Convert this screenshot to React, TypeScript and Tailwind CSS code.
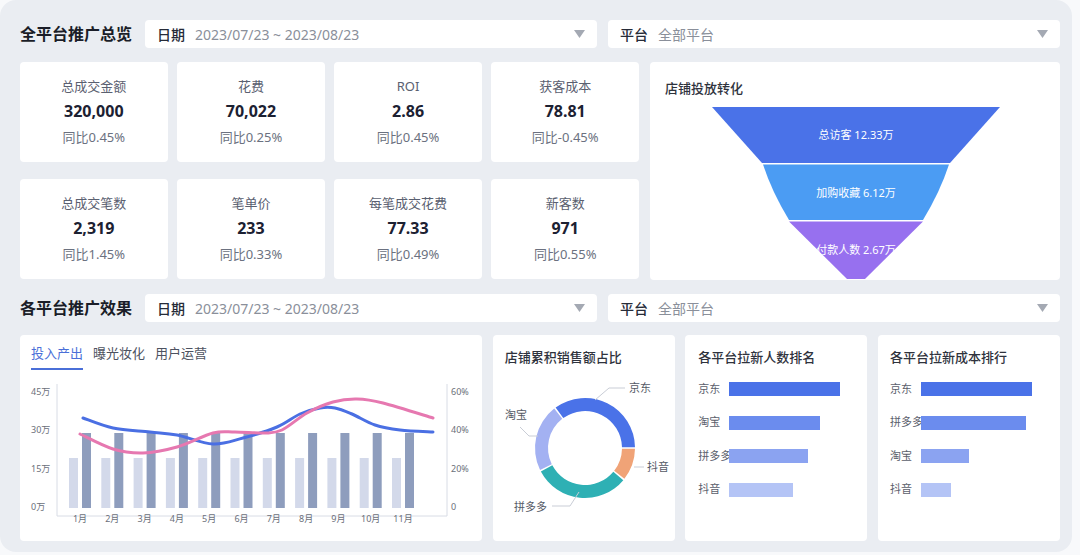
import React from "react";

type P = [number, number];

function smooth(pts: P[]): string {
  let d = `M${pts[0][0]},${pts[0][1]}`;
  for (let i = 0; i < pts.length - 1; i++) {
    const p0 = pts[i - 1] || pts[i];
    const p1 = pts[i];
    const p2 = pts[i + 1];
    const p3 = pts[i + 2] || p2;
    const c1x = p1[0] + (p2[0] - p0[0]) / 6;
    const c1y = p1[1] + (p2[1] - p0[1]) / 6;
    const c2x = p2[0] - (p3[0] - p1[0]) / 6;
    const c2y = p2[1] - (p3[1] - p1[1]) / 6;
    d += ` C${c1x.toFixed(1)},${c1y.toFixed(1)} ${c2x.toFixed(1)},${c2y.toFixed(1)} ${p2[0]},${p2[1]}`;
  }
  return d;
}

function arc(cx: number, cy: number, R: number, r: number, a0: number, a1: number): string {
  const rad = (a: number) => (a * Math.PI) / 180;
  const pt = (rr: number, a: number) => [cx + rr * Math.cos(rad(a)), cy + rr * Math.sin(rad(a))];
  const large = a1 - a0 > 180 ? 1 : 0;
  const [x0, y0] = pt(R, a0);
  const [x1, y1] = pt(R, a1);
  const [x2, y2] = pt(r, a1);
  const [x3, y3] = pt(r, a0);
  return `M${x0},${y0} A${R},${R} 0 ${large} 1 ${x1},${y1} L${x2},${y2} A${r},${r} 0 ${large} 0 ${x3},${y3} Z`;
}

function Select({ label, value }: { label: string; value: string }) {
  return (
    <div className="flex h-[28px] w-[452px] items-center rounded-[4px] bg-white pl-[12px] pr-[12px]">
      <span className="text-[14px] font-medium text-[#262b38]">{label}</span>
      <span className="ml-[10px] text-[14px] text-[#8a8f9a]">{value}</span>
      <svg className="ml-auto" width="11" height="8" viewBox="0 0 11 8">
        <path d="M0 0 L11 0 L5.5 8 Z" fill="#a4a9b3" />
      </svg>
    </div>
  );
}

function Kpi({ label, value, change }: { label: string; value: string; change: string }) {
  return (
    <div className="flex h-[100px] flex-col items-center rounded-[4px] bg-white pt-[15px]">
      <div className="text-[13px] leading-[18px] text-[#5a6070]">{label}</div>
      <div className="mt-[5px] text-[16px] font-bold leading-[22px] text-[#1c2132]">{value}</div>
      <div className="mt-[6px] text-[13px] leading-[18px] text-[#6b7180]">{change}</div>
    </div>
  );
}

function BarCard({ title, rows, pl }: { title: string; rows: { name: string; w: number; c: string }[]; pl: string }) {
  return (
    <div className={`flex h-[206px] w-[182px] flex-col rounded-[4px] bg-white pt-[13px] ${pl}`}>
      <div className="text-[13px] font-medium leading-[18px] text-[#2f333d]">{title}</div>
      <div className="mt-[16px] flex flex-col gap-[19.5px]">
        {rows.map((r) => (
          <div key={r.name} className="flex h-[14px] items-center">
            <div className="w-[31px] whitespace-nowrap text-[11px] text-[#5b606c]">{r.name}</div>
            <div className="h-[14px]" style={{ width: r.w, background: r.c }} />
          </div>
        ))}
      </div>
    </div>
  );
}

const BLUE = "#4a72e8";

export default function App() {
  const months = Array.from({ length: 11 }, (_, i) => 60 + i * 32.3);
  const bluePts: P[] = [
    [63, 48], [93, 58], [130, 62], [157, 65], [193, 74], [223, 68], [257, 57], [280, 44],
    [300, 38], [315, 38], [332, 44], [355, 55], [380, 60], [413, 62],
  ];
  const pinkPts: P[] = [
    [60, 64], [93, 79], [123, 83], [157, 77], [193, 63], [215, 62], [245, 63], [262, 60],
    [287, 43], [313, 32], [337, 29], [363, 33], [413, 48],
  ];

  return (
    <div className="h-[555px] w-[1080px] overflow-hidden bg-[#f8f9fb] font-['Noto_Sans','Noto_Sans_CJK_SC',sans-serif]">
      <div className="h-[552px] w-[1072px] rounded-[16px] bg-[#eaedf2] pl-[20px] pt-[20px]">
        {/* Header 1 */}
        <div className="flex h-[28px] w-[1040px] items-center">
          <div className="w-[125px] text-[16px] font-bold text-[#1a1d28]">全平台推广总览</div>
          <Select label="日期" value="2023/07/23 ~ 2023/08/23" />
          <div className="ml-[11px]">
            <Select label="平台" value="全部平台" />
          </div>
        </div>

        {/* Top section */}
        <div className="mt-[14px] flex w-[1040px] gap-[11px]">
          <div className="grid w-[619px] grid-cols-4 gap-x-[9.5px] gap-y-[15px]">
            <Kpi label="总成交金额" value="320,000" change="同比0.45%" />
            <Kpi label="花费" value="70,022" change="同比0.25%" />
            <Kpi label="ROI" value="2.86" change="同比0.45%" />
            <Kpi label="获客成本" value="78.81" change="同比-0.45%" />
            <Kpi label="总成交笔数" value="2,319" change="同比1.45%" />
            <Kpi label="笔单价" value="233" change="同比0.33%" />
            <Kpi label="每笔成交花费" value="77.33" change="同比0.49%" />
            <Kpi label="新客数" value="971" change="同比0.55%" />
          </div>
          <div className="flex h-[218px] w-[410px] flex-col overflow-hidden rounded-[4px] bg-white pt-[17px]">
            <div className="pl-[15px] text-[13px] font-medium leading-[18px] text-[#2f333d]">店铺投放转化</div>
            <svg width="410" height="183" viewBox="0 0 410 183" className="block">
              <path d="M62,10 L350,10 L300,66 L112,66 Z" fill="#4a72e8" />
              <path d="M113,67.5 L299,67.5 Q290,95 273,123 L139,123 Q122,95 113,67.5 Z" fill="#4b9cf3" />
              <path d="M139,124.5 L273,124.5 L215,182 L197,182 Z" fill="#9770ef" />
              <text x="206" y="42" textAnchor="middle" fontSize="11" fill="#ffffff">总访客 12.33万</text>
              <text x="206" y="100" textAnchor="middle" fontSize="11" fill="#ffffff">加购收藏 6.12万</text>
              <text x="206" y="157" textAnchor="middle" fontSize="11" fill="#ffffff">付款人数 2.67万</text>
            </svg>
          </div>
        </div>

        {/* Header 2 */}
        <div className="mt-[14px] flex h-[28px] w-[1040px] items-center">
          <div className="w-[125px] text-[16px] font-bold text-[#1a1d28]">各平台推广效果</div>
          <Select label="日期" value="2023/07/23 ~ 2023/08/23" />
          <div className="ml-[11px]">
            <Select label="平台" value="全部平台" />
          </div>
        </div>

        {/* Bottom section */}
        <div className="mt-[13px] flex w-[1040px] justify-between">
          {/* Chart card */}
          <div className="flex h-[206px] w-[462px] flex-col rounded-[4px] bg-white">
            <div className="flex gap-[10px] pl-[11px] pt-[9px]">
              <div className="border-b-2 border-[#4a6fd8] pb-[6px] text-[13px] leading-[18px] text-[#4a6fd8]">投入产出</div>
              <div className="pb-[6px] text-[13px] leading-[18px] text-[#4d5260]">曝光妆化</div>
              <div className="pb-[6px] text-[13px] leading-[18px] text-[#4d5260]">用户运营</div>
            </div>
            <svg width="462" height="168" viewBox="0 0 462 168" className="block">
              {[
                ["45万", 21],
                ["30万", 59],
                ["15万", 98],
                ["0万", 136],
              ].map(([t, y]) => (
                <text key={t as string} x="11" y={(y as number) + 3.5} fontSize="9" fill="#6b6f7a">{t}</text>
              ))}
              {[
                ["60%", 21],
                ["40%", 59],
                ["20%", 98],
                ["0", 136],
              ].map(([t, y]) => (
                <text key={t as string} x="431" y={(y as number) + 3.5} fontSize="9" fill="#6b6f7a">{t}</text>
              ))}
              <line x1="37" y1="14" x2="37" y2="146" stroke="#d8dce5" strokeWidth="1" />
              <line x1="427" y1="14" x2="427" y2="146" stroke="#d8dce5" strokeWidth="1" />
              <line x1="37" y1="146" x2="427" y2="146" stroke="#d8dce5" strokeWidth="1" />
              {months.map((c, i) => (
                <g key={i}>
                  <rect x={c - 11} y="88" width="9" height="50" fill="#d3d9ea" />
                  <rect x={c + 2} y="63" width="9" height="75" fill="#8e9dbd" />
                  <text x={c} y="152" textAnchor="middle" fontSize="9" fill="#6b6f7a">{`${i + 1}月`}</text>
                </g>
              ))}
              <path d={smooth(bluePts)} fill="none" stroke="#4a6fe3" strokeWidth="3" strokeLinecap="round" />
              <path d={smooth(pinkPts)} fill="none" stroke="#e678b0" strokeWidth="3" strokeLinecap="round" />
            </svg>
          </div>

          {/* Donut card */}
          <div className="flex h-[206px] w-[182px] flex-col rounded-[4px] bg-white pt-[13px]">
            <div className="pl-[12px] text-[13px] font-medium leading-[18px] text-[#2f333d]">店铺累积销售额占比</div>
            <svg width="182" height="175" viewBox="0 0 182 175" className="block">
              <path d={arc(92, 82, 50, 37, -126, -1)} fill={BLUE} />
              <path d={arc(92, 82, 50, 37, 1, 38)} fill="#f0a377" />
              <path d={arc(92, 82, 50, 37, 40, 152)} fill="#2eb0b4" />
              <path d={arc(92, 82, 50, 37, 154, 232)} fill="#a3b1f2" />
              <polyline points="102,34 116,22 132,22" fill="none" stroke="#c9cdd6" strokeWidth="1" />
              <polyline points="27,61 36,70 45,70" fill="none" stroke="#c9cdd6" strokeWidth="1" />
              <polyline points="141,101 151,101" fill="none" stroke="#c9cdd6" strokeWidth="1" />
              <polyline points="86,126 77,140 59,140" fill="none" stroke="#c9cdd6" strokeWidth="1" />
              <text x="136" y="26" fontSize="11" fill="#555a66">京东</text>
              <text x="12" y="53" fontSize="11" fill="#555a66">淘宝</text>
              <text x="154" y="105" fontSize="11" fill="#555a66">抖音</text>
              <text x="21" y="145" fontSize="11" fill="#555a66">拼多多</text>
            </svg>
          </div>

          <BarCard
            title="各平台拉新人数排名"
            pl="pl-[13px]"
            rows={[
              { name: "京东", w: 111, c: "#4a72e8" },
              { name: "淘宝", w: 91, c: "#6b8cee" },
              { name: "拼多多", w: 79, c: "#8ba3f1" },
              { name: "抖音", w: 64, c: "#b4c4f6" },
            ]}
          />
          <BarCard
            title="各平台拉新成本排行"
            pl="pl-[12px]"
            rows={[
              { name: "京东", w: 111, c: "#4a72e8" },
              { name: "拼多多", w: 105, c: "#6b8cee" },
              { name: "淘宝", w: 48, c: "#8ba3f1" },
              { name: "抖音", w: 30, c: "#b4c4f6" },
            ]}
          />
        </div>
      </div>
    </div>
  );
}
